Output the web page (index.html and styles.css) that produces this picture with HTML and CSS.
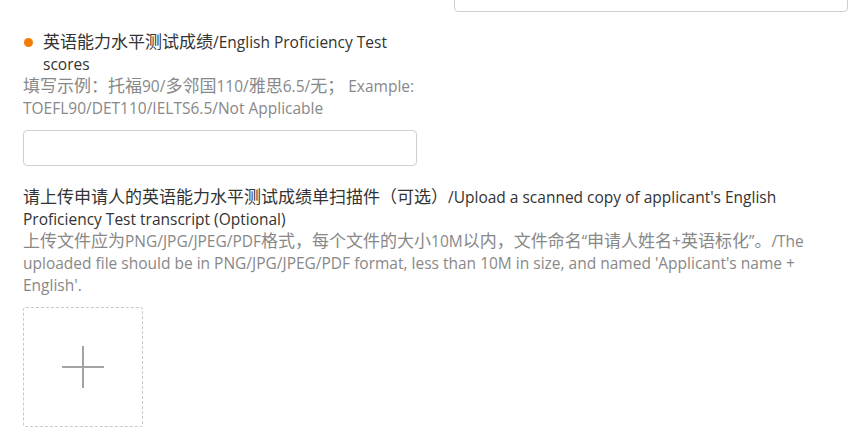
FILE: index.html
```html
<!DOCTYPE html>
<html lang="zh">
<head>
<meta charset="utf-8">
<link rel="stylesheet" href="styles.css">
</head>
<body>
<div class="form">
  <div class="row">
    <div class="field"></div>
    <div class="field"><div class="input"></div></div>
  </div>
  <div class="row row-gap">
    <div class="field">
      <div class="label"><span class="dot"></span><span><span class="zh">英语能力水平测试成绩</span>/English Proficiency Test scores</span></div>
      <div class="hint"><span class="zh">填写示例：托福</span>90/<span class="zh">多邻国</span>110/<span class="zh">雅思</span>6.5/<span class="zh">无；</span> Example: TOEFL90/DET110/IELTS6.5/Not Applicable</div>
      <div class="input input-mt"></div>
    </div>
    <div class="field"></div>
  </div>
  <div class="full">
    <div class="label-plain"><span class="zh">请上传申请人的英语能力水平测试成绩单扫描件（可选）</span>/Upload a scanned copy of applicant's English Proficiency Test transcript (Optional)</div>
    <div class="hint"><span class="zh">上传文件应为</span>PNG/JPG/JPEG/PDF<span class="zh">格式，每个文件的大小</span>10M<span class="zh">以内，文件命名</span>“<span class="zh">申请人姓名</span>+<span class="zh">英语标化</span>”<span class="zh">。</span>/The uploaded file should be in PNG/JPG/JPEG/PDF format, less than 10M in size, and named 'Applicant's name + English'.</div>
    <div class="upload">
      <svg width="44" height="44" viewBox="0 0 44 44"><path d="M22 1V43M1 22H43" stroke="#a3a3a3" stroke-width="2"/></svg>
    </div>
  </div>
</div>
</body>
</html>
```
FILE: styles.css
```css
html, body { margin: 0; padding: 0; background: #fff; }
body {
  font-family: "Open Sans", "Noto Sans CJK SC", sans-serif;
  font-size: 15.5px;
  line-height: 22px;
  color: #333;
}
.zh {
  font-family: "Noto Sans CJK SC", sans-serif;
  font-size: 17px;
  line-height: 1;
}
.form {
  width: 825px;
  margin: -24px 0 0 23px;
}
.row {
  display: grid;
  grid-template-columns: 394px 394px;
  column-gap: 37px;
}
.row-gap { margin-top: 19px; }
.input {
  height: 34px;
  border: 1px solid #cfcfcf;
  border-radius: 4px;
  background: #fff;
}
.input-mt { margin-top: 11px; }
.label { display: flex; }
.dot {
  flex: 0 0 auto;
  width: 9px;
  height: 9px;
  border-radius: 50%;
  background: #f57a00;
  margin: 7px 10px 0 1px;
}
.hint { color: #888; }
.full { margin-top: 20px; }
.upload {
  margin-top: 11px;
  width: 118px;
  height: 118px;
  border: 1px dashed #c8c8c8;
  border-radius: 3px;
  display: flex;
  align-items: center;
  justify-content: center;
}
```
